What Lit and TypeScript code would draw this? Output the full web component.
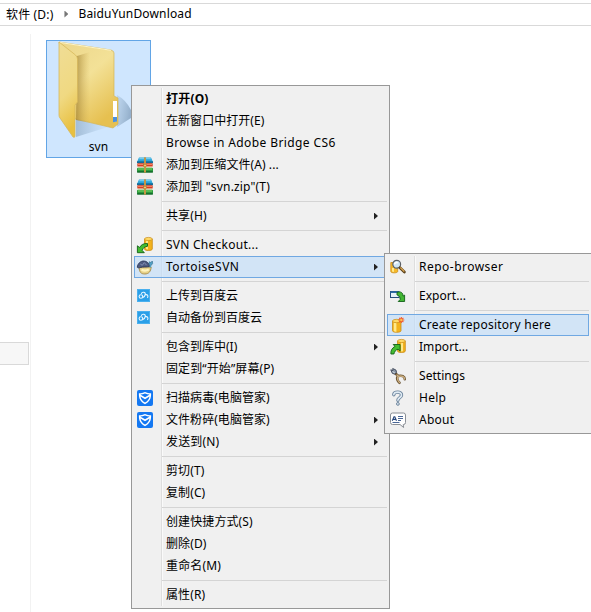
import { LitElement, html, svg, css, nothing } from "lit";
import { customElement, property } from "lit/decorators.js";
import { classMap } from "lit/directives/class-map.js";

interface Entry {
  label?: string;
  icon?: string;
  bold?: boolean;
  active?: boolean;
  sub?: boolean;
  track?: number;
}

const SEP: Entry = {};

const MAIN: Entry[] = [
  { label: "打开(O)", bold: true, track: 0.2 },
  { label: "在新窗口中打开(E)", track: 0.05 },
  { label: "Browse in Adobe Bridge CS6", track: 0.4 },
  { label: "添加到压缩文件(A) ...", icon: "archive", track: 0.08 },
  { label: '添加到 "svn.zip"(T)', icon: "archive", track: 0.17 },
  SEP,
  { label: "共享(H)", sub: true, track: 0.1 },
  SEP,
  { label: "SVN Checkout...", icon: "checkout", track: 0.25 },
  { label: "TortoiseSVN", icon: "tortoise", sub: true, active: true, track: 0.48 },
  SEP,
  { label: "上传到百度云", icon: "cloud" },
  { label: "自动备份到百度云", icon: "cloud" },
  SEP,
  { label: "包含到库中(I)", sub: true },
  { label: "固定到“开始”屏幕(P)", track: 0.1 },
  SEP,
  { label: "扫描病毒(电脑管家)", icon: "shield", track: 0.05 },
  { label: "文件粉碎(电脑管家)", icon: "shield", sub: true, track: 0.05 },
  { label: "发送到(N)", sub: true, track: 0.15 },
  SEP,
  { label: "剪切(T)", track: 0.1 },
  { label: "复制(C)", track: 0.1 },
  SEP,
  { label: "创建快捷方式(S)", track: 0.1 },
  { label: "删除(D)", track: 0.1 },
  { label: "重命名(M)", track: 0.15 },
  SEP,
  { label: "属性(R)", track: 0.1 },
];

const SVN: Entry[] = [
  { label: "Repo-browser", icon: "browse", track: 0.48 },
  SEP,
  { label: "Export...", icon: "export", track: 0.05 },
  SEP,
  { label: "Create repository here", icon: "create", active: true, track: 0.25 },
  { label: "Import...", icon: "import", track: 0.05 },
  SEP,
  { label: "Settings", icon: "settings", track: 0.05 },
  { label: "Help", icon: "help", track: 0.25 },
  { label: "About", icon: "about", track: 0.25 },
];

const ICONS: Record<string, unknown> = {
  archive: svg`
    <path d="M2 .5h12l2 4.5H0z" fill="#2ba5d8"/><path d="M2.5 1h11l.5 1.2H2z" fill="#73cdef"/>
    <rect y="4.3" width="16" height="2" fill="#146a96"/>
    <rect x=".3" y="6.3" width="15.4" height="3.4" rx=".8" fill="#d83c22"/><rect x="1" y="7" width="14" height="1" fill="#f38362"/>
    <rect x=".8" y="9.6" width="14.4" height="1.3" fill="#eee6c8"/>
    <rect y="10.8" width="16" height="4.7" rx="1" fill="#2b9b3c"/><rect x="1" y="11.4" width="14" height="1.2" fill="#78cf65"/>
    <rect y="14.3" width="16" height="1.3" rx=".6" fill="#12622a"/>
    <path d="M7 .5h2v15H7z" fill="#a97427"/><path d="M7.5.5h1v15h-1z" fill="#e1b85f"/><rect x="6.6" y="7.3" width="2.8" height="2.4" fill="#f0ca71" stroke="#a0722c" stroke-width=".5"/>`,
  checkout: svg`
    <path d="M7.5 2v10c0 2 7.8 2 7.8 0V2z" fill="#f3b21c" stroke="#c98b16" stroke-width=".8"/>
    <path d="M9 3v9l2 .5V3z" fill="#ffe88a"/><ellipse cx="11.4" cy="2" rx="3.9" ry="1.6" fill="#ffd964" stroke="#c98b16" stroke-width=".7"/>
    <path d="M10.5 6.5C6.5 6.3 4 7.8 2.6 10.5L.4 8.8v6.9h6.9l-2.1-2.3C6 11 7.5 9.6 10.5 9.3z" fill="#43bd31" stroke="#126018" stroke-width=".9"/>`,
  tortoise: svg`
    <path d="M2 8c.3 5 1.8 7 5.8 7 4 0 6-2.500 6.400-7z" fill="#e7d28a" stroke="#a58a4a" stroke-width=".9"/>
    <path d="M4.500 10.800c2.300 1 5 1 7.300-.2" stroke="#fff4bf" stroke-width="2.200" fill="none"/>
    <path d="M.3 8.300C.6 4.500 3.500 2 6.700 2s5.300 2.200 5.900 5.500C9.500 8.200 5.500 7.600 3.500 8.500 2.500 9 1 9 .3 8.300z" fill="#4d5a80" stroke="#2a3558" stroke-width=".9"/>
    <path d="M3.300 5l2 1.300 2-2.700 2.200 2.500" stroke="#8f9bc0" stroke-width=".8" fill="none"/>
    <path d="M12 5.500l.3-2.800 1.500.8L15.300 2l.3 2.600-1.800 2.200z" fill="#4fa0c4" stroke="#2c6688" stroke-width=".6"/>
    <path d="M13 8.500l.8-2" stroke="#4fa0c4" stroke-width="1.300"/>`,
  cloud: svg`
    <rect y="1" width="13" height="13" fill="#2a9fe8"/><rect x=".5" y="1.500" width="12" height="12" fill="none" stroke="#4ab0ee"/>
    <circle cx="3.900" cy="8.500" r="1.800" fill="none" stroke="#e8f6ff" stroke-width="1.100"/>
    <path d="M4.300 6c.6-2.600 4.300-2 4 .4-.2 1.500-1.400 2.800-2.800 3.400M8.300 6.700c2.600-.6 3.200 1.500 2.100 3.200" fill="none" stroke="#e8f6ff" stroke-width="1.100"/>`,
  shield: svg`
    <rect width="16" height="16" rx="2" fill="#1478f2"/>
    <path d="M8 2c2 .9 3.900 1.200 6.100 1.200.3 5.200-1.600 8.600-6.100 11C3.500 11.800 1.600 8.400 1.900 3.200 4.100 3.200 6 2.900 8 2z" fill="#fff"/>
    <path d="M8 3.500c1.500.6 3 .9 4.700 1L8 7.300 3.300 4.500C5 4.400 6.500 4.100 8 3.500z" fill="#1478f2"/>
    <path d="M3.500 6.500L8 9.200l4.500-2.700c-.5 2.700-2 4.600-4.500 6.100-2.500-1.500-4-3.400-4.500-6.100z" fill="#1478f2"/>`,
  browse: svg`
    <path d="M.8 3.500v9c0 1.800 6.900 1.800 6.900 0v-9z" fill="#f6b928" stroke="#c98b16" stroke-width=".8"/><path d="M2 9v3.500l2 .5V9z" fill="#ffe88a"/>
    <circle cx="6.700" cy="5.300" r="3.900" fill="#cfe6f4" stroke="#5a5f66" stroke-width="1.200"/><path d="M4.500 5.400C4.700 4 6 3.200 7.800 3.700" stroke="#fff" stroke-width="1.600" fill="none"/>
    <path d="M10 8.700l4.400 4.300" stroke="#5c431d" stroke-width="2.800" stroke-linecap="round"/><path d="M10.300 8.500l4 4" stroke="#d9a54f" stroke-width="1.200"/>`,
  export: svg`
    <rect x=".5" y="3.500" width="8.500" height="6" fill="#e6f0f8" stroke="#244c7c"/><rect x=".5" y="3.300" width="8.500" height="1.700" fill="#2f6ca8"/>
    <path d="M7 4.400c3.700-1.200 5.900 0 6.100 3.700l1.500-1v6.400H8.200l2-2C10 9 9.300 7.300 7 7z" fill="#43b634" stroke="#126018" stroke-width=".9"/>`,
  create: svg`
    <path d="M2.500 4v9.700c0 2.100 8.500 2.100 8.500 0V4z" fill="#f3b21c" stroke="#c98b16" stroke-width=".8"/><path d="M3.800 5.500v8.800l2.600.6V5.500z" fill="#ffe88a"/>
    <ellipse cx="6.700" cy="4" rx="4.200" ry="1.700" fill="#ffd964" stroke="#c98b16" stroke-width=".7"/>
    <path d="M11.300 0v6M8.300 3h6M9.200.9l4.200 4.200M13.400.9L9.200 5.100" stroke="#f2552c" stroke-width="1.100"/><circle cx="11.300" cy="3" r="1.200" fill="#ffc04a"/>`,
  import: svg`
    <path d="M7.500 2v10c0 2 7.800 2 7.800 0V2z" fill="#f3b21c" stroke="#c98b16" stroke-width=".8"/><path d="M11 3.500v9l2-.2V3.500z" fill="#ffe88a"/>
    <ellipse cx="11.400" cy="2" rx="3.900" ry="1.600" fill="#ffd964" stroke="#c98b16" stroke-width=".7"/>
    <path d="M.9 15C.6 11.500 2 9 5 7.400L3.200 5.500h6.900v6.700L8 10.200C5.500 11 4.500 12.500 3.900 15z" fill="#43bd31" stroke="#126018" stroke-width=".9"/>`,
  settings: svg`
    <path d="M5.500 5.500L8.300 8c3.500-1 6.500.3 6.500 3.200M7.800 7.800C6.500 10.500 7.500 13 9.500 14.800" fill="none" stroke="#6b5434" stroke-width="2.500" stroke-linecap="round"/>
    <path d="M7 7l1.500 1.300c3.300-.9 6.100.2 6.100 2.800M8 8.300c-1 2.500-.2 4.600 1.500 6.200" fill="none" stroke="#cdb080" stroke-width="1.300" stroke-linecap="round"/>
    <path d="M.8 1.800l1.500 3.500 2.400.8 1.900-1.700L5.900 2 2.700.5 3 2.600z" fill="#8a97a8" stroke="#3d4658" stroke-width=".9"/><path d="M2.500 3.700l2.200 1" stroke="#e1e8ed" stroke-width=".9"/>`,
  help: svg`
    <path d="M3.800 4.700C4 1.500 11.700.9 11.500 5.100c-.1 2.600-3.600 2.700-3.600 5.100" fill="none" stroke="#6c849c" stroke-width="3.400" stroke-linecap="round"/>
    <path d="M3.800 4.700C4 1.500 11.700.9 11.500 5.100c-.1 2.600-3.600 2.700-3.600 5.100" fill="none" stroke="#dfeaf3" stroke-width="1.600" stroke-linecap="round"/>
    <circle cx="7.900" cy="13.900" r="1.400" fill="#dfeaf3" stroke="#6c849c"/>`,
  about: svg`
    <path d="M2.500 1h11q2 0 2 2v7.500q0 2-2 2h-.3l.4 3-3.600-3H2.500q-2 0-2-2V3q0-2 2-2z" fill="#fff" stroke="#8a8f96"/>
    <path d="M2.300 8.700l1.700-4h.8l1.700 4M3 7.400h3" fill="none" stroke="#27477c" stroke-width="1.100"/><path d="M8 4.500h5M8 6.500h5M8 8.500h3M2.500 10.500h7" stroke="#4a6797"/>`,
};

@customElement("context-menu")
class ContextMenu extends LitElement {
  @property({ attribute: false }) entries: Entry[] = [];

  static styles = css`
    :host { display: block; box-sizing: border-box; border: 1px solid #989898; background: #f0f0f0; padding: 2px; }
    .list { background: linear-gradient(90deg, transparent 27px, #dedede 27px, #dedede 28px, #fafafa 28px, #fafafa 29px, transparent 29px); }
    .row { box-sizing: border-box; height: 22px; display: flex; align-items: center; border: 1px solid transparent; padding: 0 8px 0 2px; }
    .active { border-color: #70a8e2; background: rgba(190, 220, 250, 0.6); }
    .icon { width: 16px; height: 16px; flex: none; margin-right: 13px; }
    svg { display: block; width: 16px; height: 16px; overflow: visible; }
    .label { flex: 1; white-space: pre; line-height: 20px; }
    .bold { font-weight: 700; }
    .arrow { width: 4px; height: 7px; background: #222; clip-path: polygon(0 0, 100% 50%, 0 100%); }
    .sep { height: 7px; box-sizing: border-box; padding: 3px 0; margin-left: 28px; }
    .line { height: 1px; background: #d4d4d4; }
  `;

  render() {
    return html`<div class="list">${this.entries.map((e) =>
      e.label
        ? html`<div class=${classMap({ row: true, active: !!e.active })}>
            <span class="icon">${e.icon ? html`<svg viewBox="0 0 16 16">${ICONS[e.icon]}</svg>` : nothing}</span>
            <span class=${classMap({ label: true, bold: !!e.bold })} style=${e.track ? `letter-spacing:${e.track}px` : nothing}>${e.label}</span>
            ${e.sub ? html`<span class="arrow"></span>` : nothing}
          </div>`
        : html`<div class="sep"><div class="line"></div></div>`
    )}</div>`;
  }
}

@customElement("app-root")
class AppRoot extends LitElement {
  static styles = css`
    :host { display: block; position: relative; width: 591px; height: 612px; overflow: hidden; background: #fff; color: #000;
      font: 12px "Noto Sans", "Noto Sans CJK SC", sans-serif; }
    .path { box-sizing: border-box; height: 23px; margin-top: 3px; border: solid #d9d9d9; border-width: 1px 0; display: flex; align-items: center; padding: 0 0 2px 6px; white-space: pre; letter-spacing: 0.16px; }
    .crumb { width: 4px; height: 7px; background: #777; clip-path: polygon(0 0, 100% 50%, 0 100%); margin: 1px 10px 0 11px; }
    .page { display: flex; height: 586px; }
    .nav { box-sizing: border-box; width: 31px; margin-top: 8px; border-right: 1px solid #f2f2f2; padding-top: 308px; }
    .slot { box-sizing: border-box; width: 29px; height: 23px; border: 1px solid #d9d9d9; border-left: 0; background: #f7f7f7; }
    .tile { box-sizing: border-box; width: 105px; height: 118px; margin: 14px 0 0 15px; border: 1px solid #62a5e6; background: #cfe6fe; display: flex; flex-direction: column; align-items: center; }
    .tile svg { display: block; width: 103px; height: 97px; }
    .name { line-height: 18px; letter-spacing: 0.1px; }
    .main { position: absolute; left: 131px; top: 85px; width: 259px; height: 524px; }
    .svn { position: absolute; left: 384px; top: 253px; width: 208px; height: 181px; }
  `;

  render() {
    return html`
      <div class="path"><span>软件 (D:)</span><span class="crumb"></span><span>BaiduYunDownload</span></div>
      <div class="page">
        <div class="nav"><div class="slot"></div></div>
        <div class="tile">
          <svg viewBox="47 41 103 97">
            <defs>
              <linearGradient id="b" x2=".6" y2="1"><stop stop-color="#ecd68a"/><stop offset=".5" stop-color="#f3e197"/><stop offset="1" stop-color="#e6c050"/></linearGradient>
              <linearGradient id="f" x2=".2" y2="1"><stop stop-color="#f0dd96"/><stop offset=".6" stop-color="#f0d982"/><stop offset="1" stop-color="#e8c040"/></linearGradient>
              <linearGradient id="s" x2="1"><stop stop-color="#9a7a2c" stop-opacity=".65"/><stop offset="1" stop-color="#c9a64b" stop-opacity="0"/></linearGradient>
              <linearGradient id="d" x2="1" y2=".4"><stop stop-color="#7f9cb8" stop-opacity=".2"/><stop offset="1" stop-color="#6f8eac" stop-opacity=".6"/></linearGradient>
              <linearGradient id="e" x2="1"><stop stop-color="#8fabc6" stop-opacity=".7"/><stop offset="1" stop-color="#a9c6e2" stop-opacity=".1"/></linearGradient>
            </defs>
            <path d="M117 95q9 5 14 15v8l-14 9z" fill="url(#d)"/>
            <path d="M76 119l32 8-32 10z" fill="url(#e)"/>
            <path d="M59 42l52 8q3 1 3 3v43l4 2v26l-5 4-38-9z" fill="url(#b)" stroke="#d3b458" stroke-width=".7"/>
            <path d="M77 56l13-4v71l-14-3z" fill="url(#s)"/>
            <path d="M59 42.300l52 8" stroke="#fff5c9" stroke-width="1"/>
            <path d="M113 101h4v20l-4 1z" fill="#fff"/><path d="M113 117h4v4.500l-4 .7z" fill="#4b91df"/>
            <path d="M59 42l16.500 13q2 2 2 4v43l-2.500 3v31q0 2-2 1L60 118q-1-1-1-3z" fill="url(#f)" stroke="#d7b85b" stroke-width=".8"/>
          </svg>
          <span class="name">svn</span>
        </div>
      </div>
      <context-menu class="main" .entries=${MAIN}></context-menu>
      <context-menu class="svn" .entries=${SVN}></context-menu>
    `;
  }
}
